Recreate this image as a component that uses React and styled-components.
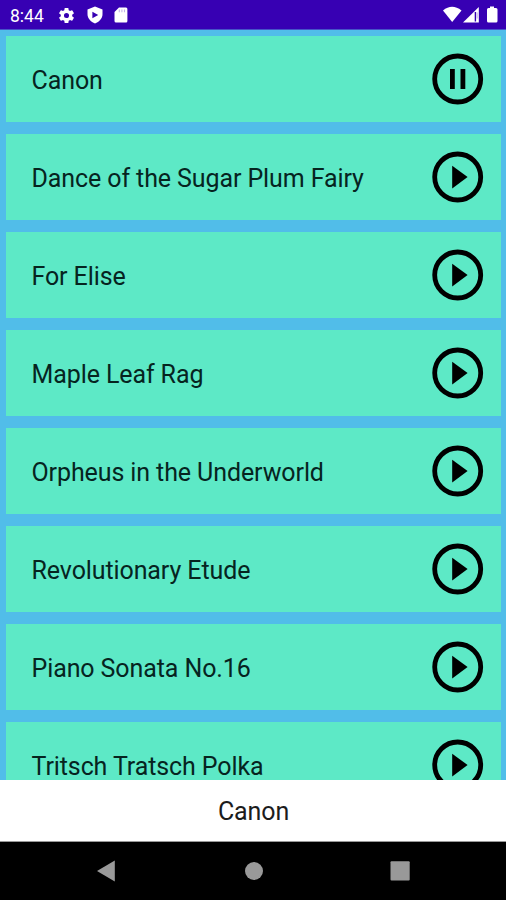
import React, {useState} from 'react'
import styled, {createGlobalStyle} from 'styled-components'

const songs = [
    "Canon",
    "Dance of the Sugar Plum Fairy",
    "For Elise",
    "Maple Leaf Rag",
    "Orpheus in the Underworld",
    "Revolutionary Etude",
    "Piano Sonata No.16",
    "Tritsch Tratsch Polka",
]

function StatusIcons() {
    return (
        <LeftIcons>
            <svg width="19" height="19" viewBox="0 0 24 24" fill="#fff">
                <path d="M19.14 12.94c.04-.3.06-.61.06-.94 0-.32-.02-.64-.07-.94l2.03-1.58a.49.49 0 0 0 .12-.61l-1.92-3.32a.49.49 0 0 0-.59-.22l-2.39.96c-.5-.38-1.03-.7-1.62-.94l-.36-2.54a.48.48 0 0 0-.48-.41h-3.84a.48.48 0 0 0-.47.41l-.36 2.54c-.59.24-1.13.57-1.62.94l-2.39-.96a.48.48 0 0 0-.59.22L2.74 8.87a.47.47 0 0 0 .12.61l2.03 1.58c-.05.3-.09.63-.09.94s.02.64.07.94l-2.03 1.58a.49.49 0 0 0-.12.61l1.92 3.32c.12.22.37.29.59.22l2.39-.96c.5.38 1.03.7 1.62.94l.36 2.54c.05.24.24.41.48.41h3.84c.24 0 .44-.17.47-.41l.36-2.54c.59-.24 1.13-.56 1.62-.94l2.39.96c.22.08.47 0 .59-.22l1.92-3.32a.47.47 0 0 0-.12-.61zM12 15.2a3.2 3.2 0 1 1 0-6.4 3.2 3.2 0 0 1 0 6.4z" />
            </svg>
            <svg width="16" height="18" viewBox="0 0 16 18">
                <path d="M8 .5L15.5 3.5V8C15.5 12.5 12.2 15.8 8 17.4C3.8 15.8.5 12.5.5 8V3.5Z" fill="#fff" />
                <path d="M5.4 5.8L11.2 9L5.4 12.2Z" fill="#3700b3" />
            </svg>
            <svg width="14" height="16" viewBox="0 0 14 16">
                <path d="M5 .5H12Q13.4.5 13.4 2V14Q13.4 15.5 12 15.5H2Q.5 15.5.5 14V5Z" fill="#fff" />
                <path d="M5.3 2.6V5.3M7.9 2.6V5.3M10.5 2.6V5.3" stroke="#3700b3" strokeOpacity="0.3" strokeWidth="1.1" />
            </svg>
        </LeftIcons>
    )
}

function SignalIcons() {
    return (
        <svg width="56" height="18" viewBox="0 0 56 18" fill="#fff">
            <path d="M0 4.5Q9-3 18.5 4.5L9.2 16Z" />
            <path d="M35.8 1V16.5H20Z" />
            <path d="M32.4 6V15.5" stroke="#3700b3" strokeWidth="1.4" />
            <path d="M34.2 6.5V12.5" stroke="#3700b3" strokeWidth="1" strokeOpacity="0.3" />
            <path d="M47 2V.5H51V2H53Q54.5 2 54.5 3.5V15Q54.5 16.5 53 16.5H45.5Q44 16.5 44 15V3.5Q44 2 45.5 2Z" />
        </svg>
    )
}

function SongRow({title, playing, onToggle}) {
    return (
        <Song>
            <Title>{title}</Title>
            <PlayButton onClick={onToggle} aria-label={playing ? "Pause" : "Play"}>
                <svg width="52" height="52" viewBox="0 0 52 52">
                    <circle cx="25.7" cy="26" r="23" fill="none" stroke="#000" strokeWidth="4.8" />
                    {playing
                        ? <path d="M18 16h4.8v20h-4.8zM28.5 16h4.8v20h-4.8z" />
                        : <path d="M20.2 14.7L35.6 26L20.2 37.4Z" />}
                </svg>
            </PlayButton>
        </Song>
    )
}

function App() {
    const [current, setCurrent] = useState("Canon");
    const [playing, setPlaying] = useState(true);

    const toggleHandler=(song)=>{
        setPlaying(song === current ? !playing : true);
        setCurrent(song);
    }

    return (
        <Screen>
            <GlobalStyle />
            <StatusBar>
                <Clock>8:44</Clock>
                <StatusIcons />
                <SignalIcons />
            </StatusBar>
            <SongList>
                {songs.map((song)=>(
                    <SongRow
                        key={song}
                        title={song}
                        playing={playing && song === current}
                        onToggle={()=>toggleHandler(song)}
                    />
                ))}
            </SongList>
            <NowPlaying>{current}</NowPlaying>
            <NavBar>
                <svg width="20" height="22" viewBox="0 0 20 22">
                    <path d="M0 11L17.8.4V21.6Z" fill="#999" />
                </svg>
                <svg width="18" height="18" viewBox="0 0 18 18">
                    <circle cx="9" cy="9" r="9" fill="#999" />
                </svg>
                <svg width="20" height="20" viewBox="0 0 20 20">
                    <rect x=".5" y=".3" width="19.2" height="19.2" rx="1" fill="#999" />
                </svg>
            </NavBar>
        </Screen>
    )
}

const GlobalStyle = createGlobalStyle`
    *{
        box-sizing:border-box;
    }
    body{
        margin:0;
        font-family: Roboto, sans-serif;
    }
    svg{
        display:block;
        flex:none;
    }
`

const Screen = styled.div`
    display:flex;
    flex-direction:column;
    width:506px;
    height:900px;
    overflow:hidden;
    background:#51bde9;
`

const StatusBar = styled.div`
    display:flex;
    align-items:center;
    flex:none;
    height:30px;
    padding:1px 7px 0 10px;
    background:#3700b3;
    border-bottom:1px solid #4654c8;
`

const Clock = styled.span`
    width:46.5px;
    padding-top:1px;
    font-size:17.5px;
    font-weight:400;
    line-height:28px;
    color:white;
`

const LeftIcons = styled.div`
    display:flex;
    align-items:center;
    gap:11px;
    flex:1;
`

const SongList = styled.div`
    display:flex;
    flex-direction:column;
    gap:12px;
    flex:1;
    min-height:0;
    overflow:hidden;
    padding:6px 5px 0 6px;
`

const Song = styled.div`
    display:flex;
    align-items:center;
    justify-content:space-between;
    flex:none;
    height:86px;
    padding:0 17px 0 25.5px;
    background:#5de9c6;
`

const Title = styled.span`
    padding-top:4px;
    font-size:25px;
    line-height:30px;
    letter-spacing:-0.1px;
    color:#06241f;
`

const PlayButton = styled.button`
    padding:0;
    border:none;
    background:none;
    cursor:pointer;
`

const NowPlaying = styled.div`
    flex:none;
    height:62px;
    padding-left:1px;
    border-bottom:1px solid #999;
    background:white;
    color:#1c1c1c;
    font-size:25px;
    line-height:64px;
    letter-spacing:-0.1px;
    text-align:center;
`

const NavBar = styled.div`
    display:flex;
    align-items:center;
    justify-content:space-between;
    flex:none;
    height:58px;
    padding:0 96px 0 97px;
    background:black;
`

export default App
